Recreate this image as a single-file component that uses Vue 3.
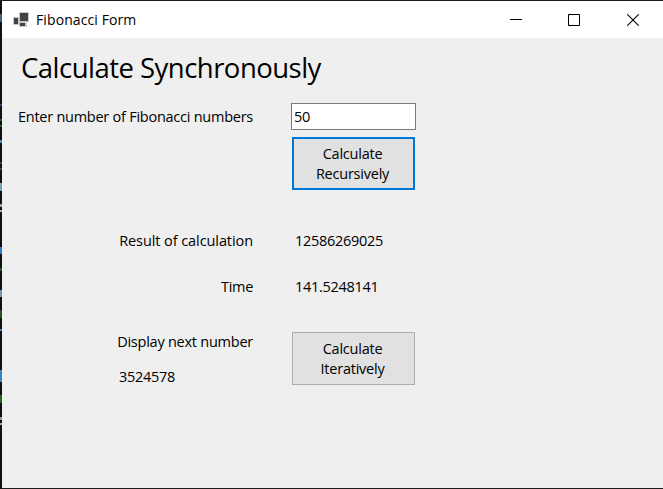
<script setup>
import { ref } from 'vue'

const count = ref('50')
const result = ref('12586269025')
const time = ref('141.5248141')
const nextNumber = ref('3524578')
</script>

<template>
  <div class="desktop">
    <div class="window">
      <header class="titlebar">
        <svg class="app-icon" width="16" height="15" viewBox="0 0 16 15" shape-rendering="crispEdges">
          <path d="M0 5h6v8H0zM6 0h10v10H6zM6 10h8v5H6z" fill="#c9c9c9" />
          <path d="M1 6h4v6H1zM7 1h8v8H7zM7 11h5v3H7z" fill="#424242" />
        </svg>
        <span class="caption">Fibonacci Form</span>
        <div class="controls">
          <svg class="minimize" width="12" height="12" viewBox="0 0 12 12" shape-rendering="crispEdges"><path d="M0 5h12v1H0z" /></svg>
          <svg width="12" height="12" viewBox="0 0 12 12" fill="none" stroke="#000"><path d="M.5 .5h11v11H.5z" /></svg>
          <svg width="12" height="12" viewBox="0 0 12 12" fill="none" stroke="#000" stroke-width="1.1"><path d="M.3 .3l11.4 11.4M11.7 .3L.3 11.7" /></svg>
        </div>
      </header>
      <main class="form">
        <h1>Calculate Synchronously</h1>
        <div class="row entry">
          <label for="count" class="enter">Enter number of Fibonacci numbers</label>
          <input id="count" v-model="count" type="text" />
        </div>
        <div class="row recursive">
          <button class="primary">Calculate<br />Recursively</button>
        </div>
        <div class="row result">
          <span class="label result-label">Result of calculation</span>
          <output>{{ result }}</output>
        </div>
        <div class="row time">
          <span class="label">Time</span>
          <output>{{ time }}</output>
        </div>
        <div class="row iterative">
          <div class="next">
            <span class="label">Display next number</span>
            <output>{{ nextNumber }}</output>
          </div>
          <button>Calculate<br />Iteratively</button>
        </div>
      </main>
    </div>
  </div>
</template>

<style>
body { margin: 0; overflow: hidden; }
</style>

<style scoped>
* { box-sizing: border-box; }
.desktop {
  width: 663px;
  height: 489px;
  padding: 1px 0 1px 2px;
  background-color: #1c1c1f;
  background-image: linear-gradient(to bottom,
    #101012 14px, #386482 14px 22px, #101012 22px 104px, #244b7a 104px 106px,
    #101012 106px 119px, #25601f 119px 121px, #101012 121px 125px, #25601f 125px 127px,
    #101012 127px 140px, #4a86b5 140px 143px, #101012 143px 162px, #25601f 162px 164px,
    #101012 164px 168px, #25601f 168px 170px, #101012 170px 183px, #6f9fbd 183px 191px,
    #101012 191px 204px, #b0a08c 204px 207px, #101012 207px 210px, #aaa 210px 212px,
    #101012 212px 247px, #2d79bd 247px 254px, #101012 254px 268px, #25601f 268px 271px,
    #101012 271px 290px, #7898ae 290px 297px, #101012 297px 310px, #205024 310px 318px,
    #101012 318px 329px, #4a86b5 329px 331px, #101012 331px 370px, #3d83bd 370px 382px,
    #101012 382px 395px, #25601f 395px 403px, #101012 403px 417px, #999 417px 420px,
    #101012 420px 423px, #aaa 423px 425px, #101012 425px);
  background-size: 2px 100%;
  background-repeat: no-repeat;
  font-family: "Open Sans", "Noto Sans", sans-serif;
  font-size: 14.5px;
  line-height: 20px;
  letter-spacing: -0.3px;
  color: #000;
}
.window { height: 487px; background: #efefef; }
.titlebar {
  display: flex;
  align-items: center;
  height: 37px;
  padding: 0 24px 0 11px;
  background: #fff;
}
.app-icon { margin-top: -1px; }
.caption { margin-left: 7px; font-size: 14px; letter-spacing: 0.1px; }
.controls { display: flex; gap: 47px; margin-left: auto; }
.minimize { margin-right: -1px; }
h1 {
  margin: 0;
  padding: 11px 0 0 19px;
  height: 65px;
  font-size: 27.5px;
  line-height: 38px;
  font-weight: 400;
  letter-spacing: -0.52px;
}
.row { display: flex; }
.entry { height: 34px; }
.entry label, .row > .label { width: 251px; text-align: right; }
.entry label { padding-top: 4px; letter-spacing: -0.25px; }
input {
  width: 125px;
  height: 27px;
  margin-left: 38px;
  padding: 0 2px;
  border: 1px solid #7a7a7a;
  border-radius: 0;
  outline: 0;
  background: #fff;
  font: inherit;
  letter-spacing: inherit;
  color: #000;
}
button {
  width: 123px;
  height: 53px;
  padding: 1px 2px 0 0;
  border: 1px solid #adadad;
  border-radius: 0;
  background: #e1e1e1;
  font: inherit;
  letter-spacing: -0.23px;
  color: #000;
}
.primary { border: 2px solid #0078d7; }
.recursive { height: 94px; padding-left: 290px; }
.row > output { margin-left: 42px; }
.result { height: 46px; }
.row > .result-label { letter-spacing: -0.08px; }
.time { height: 55px; }
.next {
  display: flex;
  flex-direction: column;
  gap: 15px;
  width: 290px;
}
.next .label { width: 251px; text-align: right; letter-spacing: -0.24px; }
.next output { padding-left: 117px; }
</style>
